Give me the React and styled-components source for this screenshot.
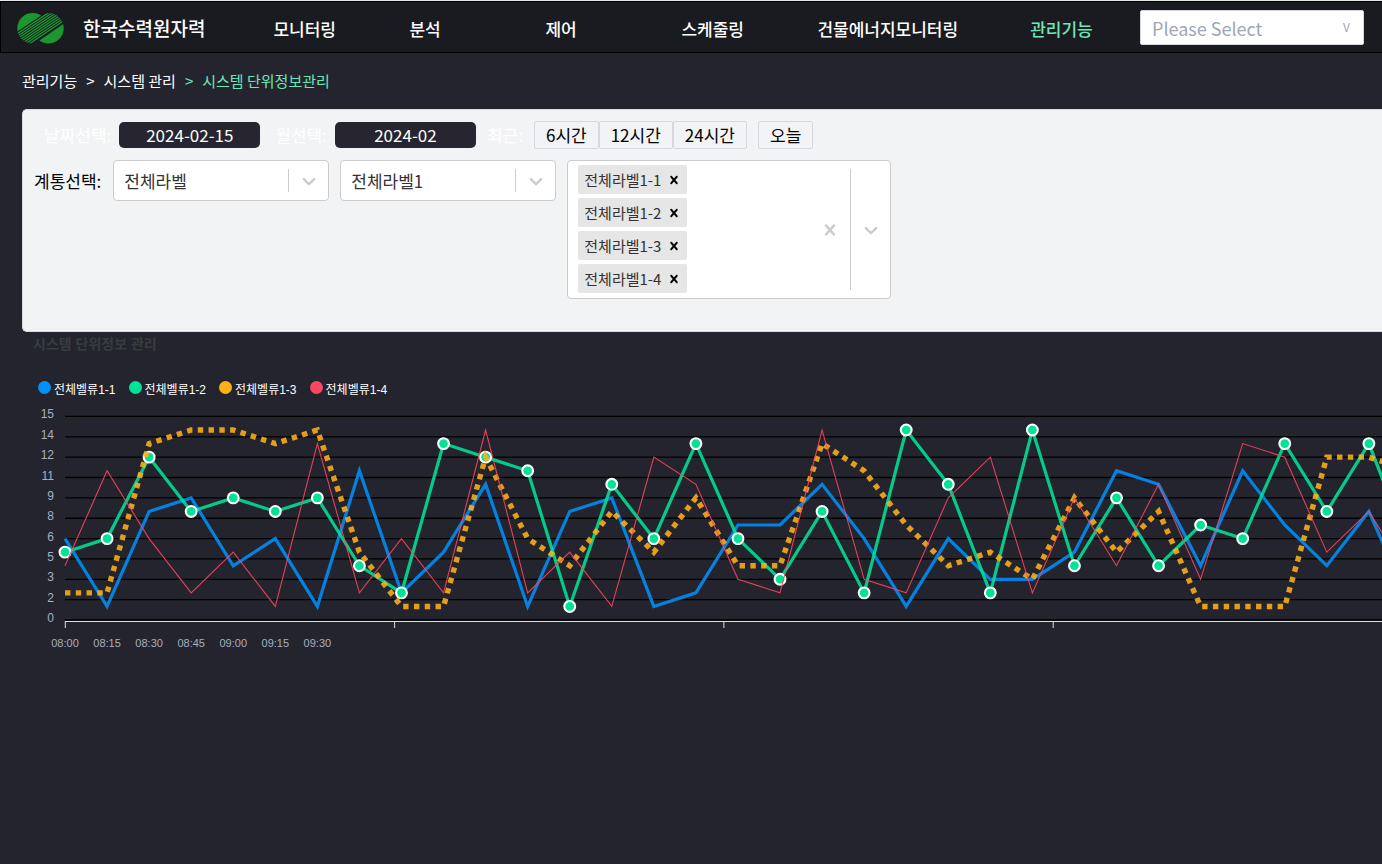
import React from 'react'
import styled, { createGlobalStyle } from 'styled-components'

const colors = {
  page: '#24242e',
  header: '#1a1b20',
  main: '#6ee7b7',
  panel: '#f2f3f5',
  line: '#cccccc',
  muted: '#a0a6b4',
  axis: '#a9afc0',
}

const GlobalStyle = createGlobalStyle`
  * {
    box-sizing: border-box;
  }

  body {
    margin: 0;
    background: ${colors.page};
    font-family: 'Noto Sans CJK KR', sans-serif;
    font-size: 17px;
    line-height: 24px;
    overflow-x: hidden;
  }

  button, input, select {
    font: inherit;
    color: inherit;
    margin: 0;
  }
`

const Page = styled.div`
  min-height: 100vh;
  border-top: 1px solid #e3e9e8;
  overflow: hidden;
`

const Header = styled.header`
  display: flex;
  align-items: center;
  height: 52px;
  padding: 0 18px 0 16px;
  border: 1px solid #000;
  border-right: 0;
  background: ${colors.header};
  color: #fff;
`

const Brand = styled.a`
  display: flex;
  align-items: center;
  gap: 19px;
  margin-right: 68px;
  padding-top: 2px;
  color: #fff;
  font-size: 19px;
  font-weight: 500;
  text-decoration: none;
  white-space: nowrap;
`

const Nav = styled.nav`
  display: flex;
  gap: 72px;
  padding-top: 4px;
`

const NavLink = styled.a`
  min-width: 64px;
  color: ${props => (props.$active ? colors.main : '#fff')};
  font-weight: 500;
  text-decoration: none;
  white-space: nowrap;
`

const SiteSelect = styled.label`
  display: flex;
  align-items: center;
  width: 224px;
  height: 35px;
  margin-left: auto;
  padding: 0 13px 0 11px;
  border: 1px solid #d1d5db;
  border-radius: 2px;
  background: #fff;
  color: ${colors.muted};
  font-size: 18px;
`

const PlainSelect = styled.select`
  flex: 1;
  min-width: 0;
  height: 100%;
  padding: 0;
  border: 0;
  background: transparent;
  appearance: none;
  outline: none;
`

const HeaderSelect = styled(PlainSelect)`
  padding-top: 2px;
`

const Caret = styled.span`
  font-size: 12px;
`

const Breadcrumb = styled.nav`
  display: flex;
  align-items: center;
  gap: 9px;
  height: 56px;
  padding-left: 22px;
  color: #fff;
  font-size: 15px;
`

const Crumb = styled.a`
  color: ${props => (props.$active ? colors.main : 'inherit')};
  text-decoration: none;
`

const Panel = styled.section`
  display: flex;
  flex-direction: column;
  gap: 11px;
  margin-left: 22px;
  padding: 11px 11px 32px;
  border: 1px solid #d9dbdf;
  border-right: 0;
  border-radius: 5px 0 0 5px;
  background: ${colors.panel};
`

const DateRow = styled.div`
  display: flex;
  align-items: center;
  gap: 11px;
  height: 28px;
  padding-left: 10px;
  color: #fff;
`

const Field = styled.div`
  display: flex;
  align-items: center;
  gap: 8px;
  margin-right: ${props => (props.$wide ? '4px' : '0')};
  white-space: nowrap;
`

const DateInput = styled.input`
  width: 141px;
  height: 26px;
  padding: 0 0 2px;
  border: 0;
  border-radius: 5px;
  background: #272630;
  color: #fff;
  text-align: center;
`

const ButtonGroup = styled.div`
  display: flex;
`

const RangeButton = styled.button`
  height: 28px;
  padding: 0 11px;
  border: 1px solid #d5d8e0;
  border-radius: 2px;
  background: transparent;
  color: #000;
  line-height: 26px;
`

const SystemRow = styled.div`
  display: flex;
  align-items: flex-start;
  gap: 11px;
`

const RowLabel = styled.label`
  margin-right: 1px;
  color: #000;
  line-height: 41px;
  white-space: nowrap;
`

const SelectBox = styled.div`
  display: flex;
  width: 216px;
  height: 41px;
  padding-left: 10px;
  border: 1px solid ${colors.line};
  border-radius: 4px;
  background: #fff;
  color: #333;
`

const MultiBox = styled(SelectBox)`
  width: 324px;
  height: auto;
  min-height: 139px;
`

const Separator = styled.span`
  width: 1px;
  margin: 8px 0;
  background: ${colors.line};
`

const Indicator = styled.span`
  display: flex;
  align-items: center;
  justify-content: center;
  width: 39px;
`

const Tags = styled.ul`
  display: flex;
  flex: 1;
  flex-direction: column;
  align-items: flex-start;
  gap: 4px;
  margin: 0;
  padding: 4px 0;
  list-style: none;
`

const Tag = styled.li`
  display: flex;
  align-items: center;
  height: 29px;
  padding-left: 6px;
  border-radius: 2px;
  background: #e6e6e6;
  font-size: 15px;
`

const IconButton = styled.button`
  display: flex;
  align-items: center;
  justify-content: center;
  width: ${props => props.$width};
  padding: 0;
  border: 0;
  background: transparent;
  color: ${props => props.color};
`

const ChartTitle = styled.h2`
  margin: 0;
  padding-left: 33px;
  color: #373d3f;
  font-family: 'Liberation Sans', 'Noto Sans CJK KR', sans-serif;
  font-size: 14px;
  line-height: 24px;
`

const Legend = styled.ul`
  display: flex;
  gap: 13px;
  margin: 0;
  padding: 25px 0 0 38px;
  color: #fff;
  font-family: 'Liberation Sans', 'Noto Sans CJK KR', sans-serif;
  font-size: 12px;
  line-height: 19px;
  list-style: none;
`

const LegendItem = styled.li`
  display: flex;
  align-items: flex-start;
  gap: 3px;
`

const Dot = styled.span`
  width: 13px;
  height: 13px;
  border-radius: 50%;
  background: ${props => props.color};
`

const ChartSvg = styled.svg`
  display: block;
  width: 100%;
  height: 260px;
  font-family: 'Liberation Sans', sans-serif;
`

const menus = ['모니터링', '분석', '제어', '스케줄링', '건물에너지모니터링', '관리기능']
const tags = ['전체라벨1-1', '전체라벨1-2', '전체라벨1-3', '전체라벨1-4']
const ticks = ['08:00', '08:15', '08:30', '08:45', '09:00', '09:15', '09:30']
const yLabels = [15, 14, 12, 11, 9, 8, 6, 5, 3, 2, 0]

const series = [
  {
    name: '전체벨류1-1', color: '#008ffb', width: 3.2,
    data: [6, 1, 8, 9, 4, 6, 1, 11, 2, 5, 10, 1, 8, 9, 1, 2, 7, 7, 10, 6, 1, 6, 3, 3, 5, 11, 10, 4, 11, 7, 4, 8, 1],
  },
  {
    name: '전체벨류1-2', color: '#00e396', width: 3.2, markers: true,
    data: [5, 6, 12, 8, 9, 8, 9, 4, 2, 13, 12, 11, 1, 10, 6, 13, 6, 3, 8, 2, 14, 10, 2, 14, 4, 9, 4, 7, 6, 13, 8, 13, 5],
  },
  {
    name: '전체벨류1-3', color: '#feb019', width: 5.4, dash: '5.39 5.39',
    data: [2, 2, 13, 14, 14, 13, 14, 5, 1, 1, 12, 6, 4, 8, 5, 9, 4, 4, 13, 11, 7, 4, 5, 3, 9, 5, 8, 1, 1, 1, 12, 12, 11],
  },
  {
    name: '전체벨류1-4', color: '#ff4560', width: 1.08,
    data: [4, 11, 6, 2, 5, 1, 13, 2, 6, 2, 14, 2, 5, 1, 12, 10, 3, 2, 14, 3, 2, 9, 12, 2, 9, 4, 10, 3, 13, 12, 5, 8, 3],
  },
]

const LEFT = 65
const BOTTOM = 220
const STEP = 42.06
const UNIT = 13.57

const px = index => LEFT + index * STEP
const py = value => BOTTOM - value * UNIT

const Logo = () => (
  <svg width="47" height="31" viewBox="0 0 47 31" aria-hidden="true">
    <defs>
      <clipPath id="logoShape">
        <circle cx="15.5" cy="15.3" r="15.2" />
        <circle cx="31.5" cy="15.3" r="15.2" />
      </clipPath>
      <clipPath id="logoLeft">
        <circle cx="15.5" cy="15.3" r="15.2" />
      </clipPath>
      <clipPath id="logoRight">
        <circle cx="31.5" cy="15.3" r="15.2" />
      </clipPath>
    </defs>
    <g fill="#1c9631">
      <path d="M-2 -4H34L-2 20Z" clipPath="url(#logoLeft)" />
      <path d="M49 34H13L49 9Z" clipPath="url(#logoRight)" />
    </g>
    <g clipPath="url(#logoShape)" stroke="#1c9631" strokeWidth="1.3">
      {[0, 1, 2, 3, 4, 5, 6, 7].map(i => (
        <path key={i} d={`M-2 ${22.2 + i * 2.6}L49 ${-12 + i * 2.6}`} />
      ))}
    </g>
  </svg>
)

const Chevron = () => (
  <svg width="22" height="22" viewBox="0 0 20 20" fill={colors.line} aria-hidden="true">
    <path d="M4.516 7.548c0.436-0.446 1.043-0.481 1.576 0l3.908 3.747 3.908-3.747c0.533-0.481 1.141-0.446 1.574 0 0.436 0.445 0.408 1.197 0 1.615-0.406 0.418-4.695 4.502-4.695 4.502-0.217 0.223-0.502 0.335-0.787 0.335s-0.57-0.112-0.789-0.335c0 0-4.287-4.084-4.695-4.502s-0.436-1.17 0-1.615z" />
  </svg>
)

const Cross = ({ size }) => (
  <svg width={size} height={size} viewBox="0 0 20 20" fill="currentColor" aria-hidden="true">
    <path d="M14.348 14.849c-0.469 0.469-1.229 0.469-1.697 0l-2.651-3.030-2.651 3.029c-0.469 0.469-1.229 0.469-1.697 0-0.469-0.469-0.469-1.229 0-1.697l2.758-3.15-2.759-3.152c-0.469-0.469-0.469-1.228 0-1.697s1.228-0.469 1.697 0l2.652 3.031 2.651-3.031c0.469-0.469 1.228-0.469 1.697 0s0.469 1.229 0 1.697l-2.758 3.152 2.758 3.15c0.469 0.469 0.469 1.229 0 1.698z" />
  </svg>
)

const LabelSelect = ({ id, label, value }) => (
  <SelectBox>
    <PlainSelect id={id} aria-label={label} defaultValue={value}>
      <option>{value}</option>
    </PlainSelect>
    <Separator />
    <Indicator><Chevron /></Indicator>
  </SelectBox>
)

const Chart = () => (
  <ChartSvg role="img" aria-label="시스템 단위정보 관리">
    {yLabels.map((label, index) => {
      const y = BOTTOM - (10 - index) * 20.355
      return (
        <g key={label}>
          <line x1={LEFT} x2="100%" y1={y} y2={y} stroke="#000" strokeWidth="1.3" />
          <text x="54" y={y + 2} textAnchor="end" fontSize="12" fill={colors.axis}>{label}</text>
        </g>
      )
    })}

    <line x1={LEFT} x2="100%" y1="221.5" y2="221.5" stroke="#e0e0e0" />
    {[0, 1, 2, 3, 4].map(i => (
      <line key={i} x1={65.3 + i * 329.3} x2={65.3 + i * 329.3} y1="221" y2="228" stroke="#e0e0e0" />
    ))}
    {ticks.map((tick, index) => (
      <text key={tick} x={px(index)} y="247" textAnchor="middle" fontSize="11" fill={colors.axis}>{tick}</text>
    ))}

    {series.map(item => (
      <g key={item.name}>
        <polyline
          points={item.data.map((value, index) => `${px(index)},${py(value)}`).join(' ')}
          fill="none"
          stroke={item.color}
          strokeWidth={item.width}
          strokeDasharray={item.dash}
          strokeOpacity="0.88"
        />
        {item.markers && item.data.map((value, index) => (
          <circle key={index} cx={px(index)} cy={py(value)} r="5.4" fill={item.color} stroke="#fff" strokeWidth="2.1" />
        ))}
      </g>
    ))}
  </ChartSvg>
)

const App = () => (
  <Page>
    <GlobalStyle />
    <Header>
      <Brand href="#"><Logo />한국수력원자력</Brand>
      <Nav>
        {menus.map(menu => (
          <NavLink href="#" key={menu} $active={menu === '관리기능'}>{menu}</NavLink>
        ))}
      </Nav>
      <SiteSelect>
        <HeaderSelect>
          <option>Please Select</option>
        </HeaderSelect>
        <Caret>V</Caret>
      </SiteSelect>
    </Header>

    <Breadcrumb>
      <Crumb href="#">관리기능</Crumb>
      <Crumb as="span">&gt;</Crumb>
      <Crumb href="#">시스템 관리</Crumb>
      <Crumb as="span" $active>&gt;</Crumb>
      <Crumb href="#" $active>시스템 단위정보관리</Crumb>
    </Breadcrumb>

    <Panel>
      <DateRow>
        <Field $wide>
          <label htmlFor="date">날짜선택:</label>
          <DateInput id="date" defaultValue="2024-02-15" />
        </Field>
        <Field>
          <label htmlFor="month">월선택:</label>
          <DateInput id="month" defaultValue="2024-02" />
        </Field>
        <span>최근:</span>
        <ButtonGroup>
          <RangeButton type="button">6시간</RangeButton>
          <RangeButton type="button">12시간</RangeButton>
          <RangeButton type="button">24시간</RangeButton>
        </ButtonGroup>
        <RangeButton type="button">오늘</RangeButton>
      </DateRow>

      <SystemRow>
        <RowLabel htmlFor="system">계통선택:</RowLabel>
        <LabelSelect id="system" value="전체라벨" />
        <LabelSelect id="group" label="전체라벨1" value="전체라벨1" />
        <MultiBox>
          <Tags>
            {tags.map(tag => (
              <Tag key={tag}>
                {tag}
                <IconButton type="button" aria-label={tag} $width="26px" color="#000"><Cross size={16} /></IconButton>
              </Tag>
            ))}
          </Tags>
          <IconButton type="button" aria-label="clear" $width="40px" color={colors.line}><Cross size={22} /></IconButton>
          <Separator />
          <Indicator><Chevron /></Indicator>
        </MultiBox>
      </SystemRow>
    </Panel>

    <section>
      <ChartTitle>시스템 단위정보 관리</ChartTitle>
      <Legend>
        {series.map(item => (
          <LegendItem key={item.name}><Dot color={item.color} />{item.name}</LegendItem>
        ))}
      </Legend>
      <Chart />
    </section>
  </Page>
)

export default App
